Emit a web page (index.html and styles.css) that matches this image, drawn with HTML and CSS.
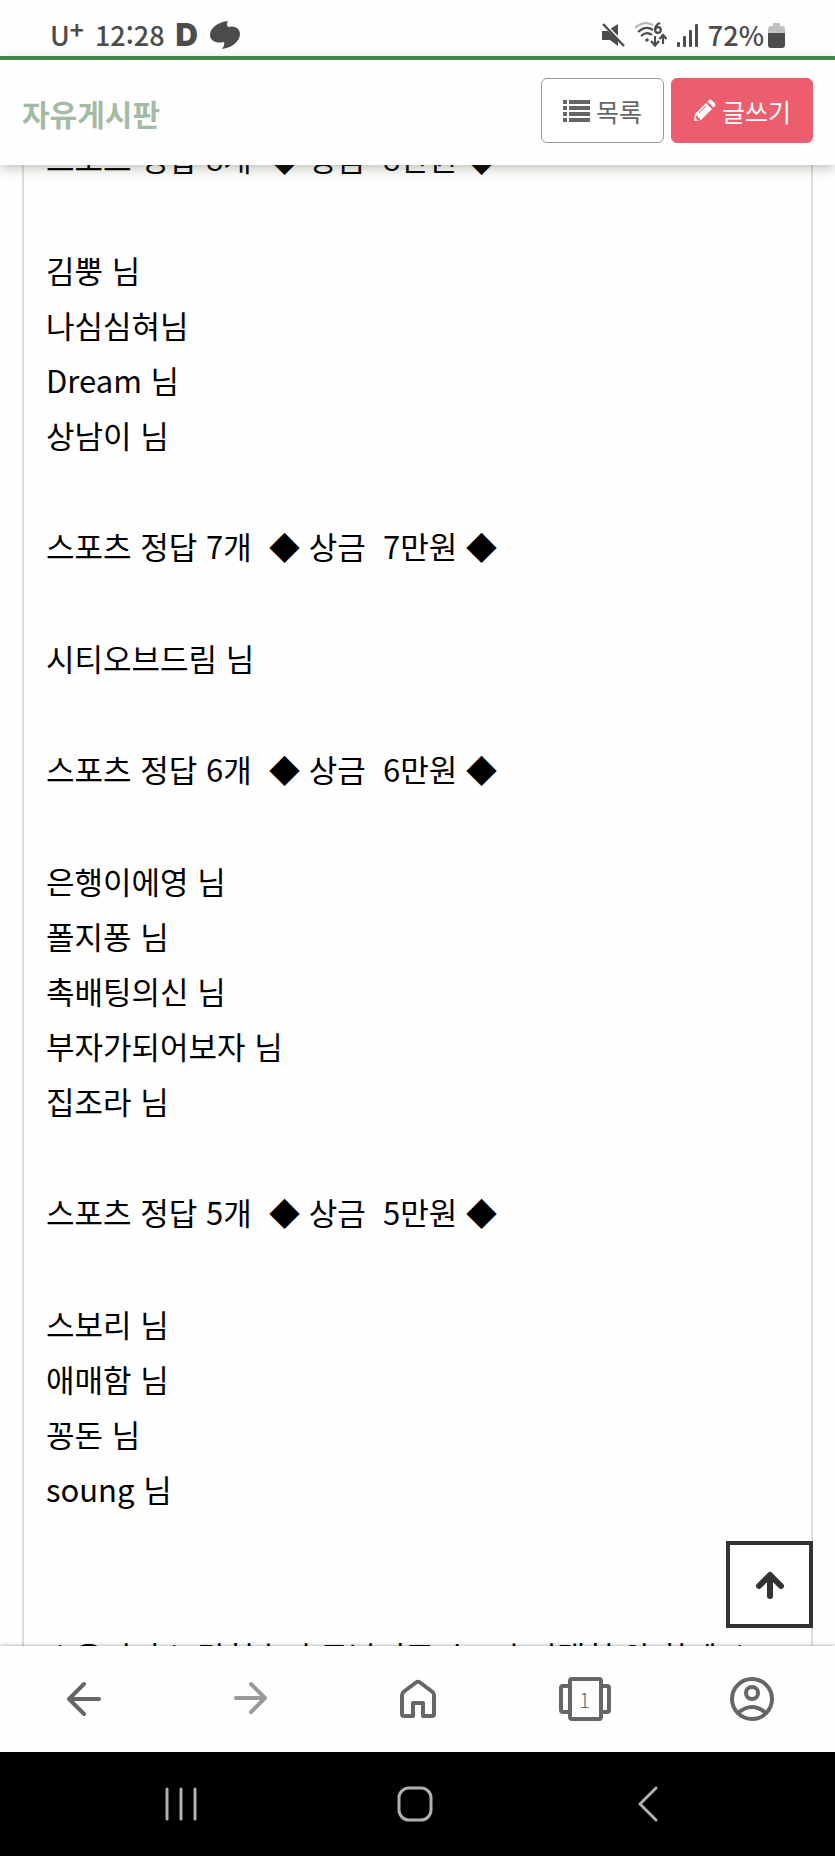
FILE: index.html
```html
<!DOCTYPE html>
<html lang="ko">
<head>
<meta charset="UTF-8">
<meta name="viewport" content="width=device-width, initial-scale=1.0">
<title>자유게시판</title>
<link rel="stylesheet" href="styles.css">
</head>
<body>
    <!-- Status bar -->
    <div class="status-bar">
        <div class="status-left">
            <span class="carrier">U<span class="plus">+</span></span>
            <span>12:28</span>
            <span class="daum">D</span>
            <svg width="32" height="30" viewBox="0 0 32 30"><path fill="#4c4c4c" d="M19 1 Q17 4 19 7 C25 5 31 8 31 14 C31 21 23 28 13 29 Q16 25 15 22 C8 24 1 21 1 15 C1 8 9 2 19 1Z"/></svg>
        </div>
        <div class="status-right">
            <svg width="24" height="24" viewBox="0 0 24 24"><path fill="#4c4c4c" d="M1 8 H7 L17 17 V23 L9 17 H1Z M9 6 L17 1 V13Z"/><path d="M4 1 L24 22" stroke="#fefefe" stroke-width="2"/><path d="M2 1 L23 23" stroke="#4c4c4c" stroke-width="2.4"/></svg>
            <svg class="wifi" width="34" height="26" viewBox="0 0 34 26" fill="none" stroke="#4c4c4c" stroke-width="2.2">
                <path d="M1 6 Q10 -2 19 3" stroke="#b8b8b8"/>
                <path d="M4 10 Q12 3 19 8M7 14 Q13 9 18 13"/>
                <circle cx="13" cy="18" r="1.8" fill="#4c4c4c" stroke="none"/>
                <circle cx="24" cy="8" r="2.8"/>
                <path d="M26 1 Q21 3 21 8M21 14 V23 M17 19 L21 23.500 L25 19M29 22 V13 M25.500 17 L29 13 L32.500 17"/>
            </svg>
            <svg width="22" height="23" viewBox="0 0 22 23" fill="#4c4c4c"><rect x="0" y="18" width="3" height="5" rx="1"/><rect x="6" y="12" width="3" height="11" rx="1"/><rect x="12" y="6" width="3" height="17" rx="1"/><rect x="18" y="0" width="3" height="23" rx="1"/></svg>
            <span class="battery">72%<svg width="17" height="25" viewBox="0 0 17 25"><path fill="#c0c0c0" d="M5 0 H12 V3 H14 Q17 3 17 6 V11 H0 V6 Q0 3 3 3 H5Z"/><path fill="#4c4c4c" d="M0 10 H17 V22 Q17 25 14 25 H3 Q0 25 0 22Z"/></svg></span>
        </div>
    </div>

    <!-- Board header -->
    <header class="board-header">
        <h1>자유게시판</h1>
        <div class="board-buttons">
            <button class="btn btn-list">
                <svg width="27" height="22" viewBox="0 0 27 22" fill="#666"><path d="M0 0h4v4H0zM6 0h21v4H6zM0 6h4v4H0zM6 6h21v4H6zM0 12h4v4H0zM6 12h21v4H6zM0 18h4v4H0zM6 18h21v4H6z"/></svg>목록
            </button>
            <button class="btn btn-write">
                <svg width="23" height="23" viewBox="0 0 23 23"><path fill="#fff" d="M1 22 L2 15 L13 4 L19 10 L8 21Z M14.500 2.500 L16 1 Q17 0 18.500 1 L22 4.500 Q23 6 22 7 L20.500 8.500Z"/><path d="M6 14 L13 7" stroke="#ec5e6e" stroke-width="1"/><path fill="#ec5e6e" d="M3 17h2v2h2v2H4L3 19z"/></svg>글쓰기
            </button>
        </div>
    </header>

    <!-- Post -->
    <main class="board">
        <article class="post">
            <h2>스포츠 정답 8개&nbsp; ◆ 상금&nbsp; 8만원 ◆</h2>
            <p>김뿡 님<br>나심심혀님<br>Dream 님<br>상남이 님</p>

            <h2>스포츠 정답 7개&nbsp; ◆ 상금&nbsp; 7만원 ◆</h2>
            <p>시티오브드림 님</p>

            <h2>스포츠 정답 6개&nbsp; ◆ 상금&nbsp; 6만원 ◆</h2>
            <p>은행이에영 님<br>폴지퐁 님<br>촉배팅의신 님<br>부자가되어보자 님<br>집조라 님</p>

            <h2>스포츠 정답 5개&nbsp; ◆ 상금&nbsp; 5만원 ◆</h2>
            <p>스보리 님<br>애매함 님<br>꽁돈 님<br>soung 님</p>

            <p class="closing">스용리피스 담첨추리 굳남기주시고 추리랭첨 와 함께 스</p>
        </article>
        <button class="go-top" aria-label="맨 위로">
            <svg width="30" height="28" viewBox="0 0 30 28" fill="none" stroke="#333" stroke-width="6" stroke-linecap="round" stroke-linejoin="round"><path d="M15 25 V5"/><path d="M4 15 L15 4 L26 15"/></svg>
        </button>
    </main>

    <!-- Browser toolbar -->
    <nav class="toolbar">
        <button aria-label="뒤로"><svg width="36" height="36" viewBox="0 0 36 36"><path d="M33 18 H3 M18 3 L3 18 L18 33"/></svg></button>
        <button class="forward" aria-label="앞으로"><svg width="36" height="36" viewBox="0 0 36 36"><path d="M3 17 H32 M18 3 L32 17 L18 31"/></svg></button>
        <button aria-label="홈"><svg width="38" height="40" viewBox="0 0 38 40"><path d="M3 16 Q3 14 5 12.500 L17 3.500 Q19 2 21 3.500 L33 12.500 Q35 14 35 16 V35 Q35 37 33 37 H24 V24 H14 V37 H5 Q3 37 3 35Z"/></svg></button>
        <button class="tabs" aria-label="탭"><svg width="52" height="44" viewBox="0 0 52 44"><rect x="11" y="2" width="31" height="40" rx="2"/><path d="M11 9 H4 Q2 9 2 11 V33 Q2 35 4 35 H11 M42 9 H48 Q50 9 50 11 V33 Q50 35 48 35 H42"/></svg><span>1</span></button>
        <button aria-label="내 정보"><svg width="44" height="44" viewBox="0 0 44 44"><circle cx="22" cy="22" r="20"/><circle cx="22" cy="16" r="6"/><path d="M8 36 Q22 24 36 36"/></svg></button>
    </nav>

    <!-- System navigation -->
    <nav class="system-nav">
        <button aria-label="최근 앱"><svg width="32" height="34" viewBox="0 0 32 34"><path d="M2 2 V32 M16 2 V32 M30 2 V32"/></svg></button>
        <button aria-label="홈 화면"><svg width="36" height="36" viewBox="0 0 36 36"><rect x="2" y="2" width="32" height="32" rx="10"/></svg></button>
        <button aria-label="이전"><svg width="20" height="36" viewBox="0 0 20 36"><path d="M18 2 L2 18 L18 34"/></svg></button>
    </nav>
</body>
</html>
```
FILE: styles.css
```css
* {
    box-sizing: border-box;
}

body {
    margin: 0;
    height: 100vh;
    display: flex;
    flex-direction: column;
    overflow: hidden;
    background: #fefefe;
    color: #000;
    font-family: "Noto Sans CJK KR", "Noto Sans", sans-serif;
}

button {
    font-family: inherit;
    cursor: pointer;
}

svg {
    display: block;
    flex: none;
}

/* Status bar */
.status-bar {
    flex: none;
    display: flex;
    justify-content: space-between;
    height: 60px;
    padding: 11px 50px 0;
    border-bottom: 4px solid #3f8e4b;
    color: #4c4c4c;
    font-size: 27px;
    font-weight: 500;
    line-height: 44px;
}

.status-left,
.status-right {
    display: flex;
    align-items: center;
    height: 48px;
}

.status-left {
    gap: 11px;
}

.status-right {
    gap: 9px;
}

.carrier {
    display: flex;
}

.plus {
    font-size: 24px;
    font-weight: 700;
    line-height: 32px;
}

.daum {
    font-family: Inter, sans-serif;
    font-size: 31px;
    font-weight: 900;
}

.battery {
    display: flex;
    align-items: center;
    gap: 4px;
}

/* Board header */
.board-header {
    flex: none;
    z-index: 1;
    display: flex;
    justify-content: space-between;
    align-items: center;
    height: 105px;
    padding: 0 22px;
    background: #fefefe;
    box-shadow: 0 2px 12px rgba(70, 75, 50, 0.4);
}

.board-header h1 {
    margin: 0;
    color: #a3bba4;
    font-size: 30px;
    font-weight: 700;
}

.board-buttons {
    display: flex;
    gap: 7px;
    margin-bottom: 4px;
}

.btn {
    display: flex;
    align-items: center;
    gap: 6px;
    height: 65px;
    padding: 0 21px;
    border: 1px solid #999;
    border-radius: 6px;
    background: #fff;
    color: #666;
    font-size: 25px;
}

.btn-write {
    border-color: #ec5e6e;
    background: #ec5e6e;
    color: #fff;
}

/* Post */
.board {
    position: relative;
    flex: 1;
    min-height: 0;
    padding: 0 22px;
    overflow: hidden;
}

/* Scrolled part way down, first line runs under the header */
.post {
    margin-top: -35px;
    padding: 0 22px;
    border: solid #ddd;
    border-width: 0 2px;
    font-size: 31px;
    line-height: 55px;
}

.post h2,
.post p {
    margin: 0 0 56px;
    font-size: 31px;
    font-weight: 400;
}

.post h2 {
    line-height: 56px;
}

.post .closing {
    margin-top: 112px;
    white-space: nowrap;
}

.go-top {
    position: absolute;
    right: 22px;
    bottom: 18px;
    display: flex;
    justify-content: center;
    align-items: center;
    width: 87px;
    height: 87px;
    border: 4px solid #333;
    background: #fff;
}

/* Browser toolbar */
.toolbar {
    flex: none;
    z-index: 1;
    display: flex;
    height: 106px;
    background: #fefefe;
    box-shadow: 0 0 4px rgba(0, 0, 0, 0.4);
}

.toolbar button,
.system-nav button {
    flex: 1;
    display: flex;
    justify-content: center;
    align-items: center;
    padding: 0;
    border: 0;
    background: none;
}

.toolbar svg {
    fill: none;
    stroke: #666;
    stroke-width: 4;
    stroke-linecap: round;
    stroke-linejoin: round;
}

.toolbar .forward svg {
    stroke: #999;
}

.toolbar .tabs {
    position: relative;
}

.tabs span {
    position: absolute;
    color: #666;
    font-size: 20px;
    font-weight: 300;
}

/* System navigation */
.system-nav {
    flex: none;
    display: flex;
    height: 104px;
    padding: 0 70px 0 64px;
    background: #000;
}

.system-nav svg {
    fill: none;
    stroke: #b0b0b0;
    stroke-width: 3;
    stroke-linecap: round;
    stroke-linejoin: round;
}
```
